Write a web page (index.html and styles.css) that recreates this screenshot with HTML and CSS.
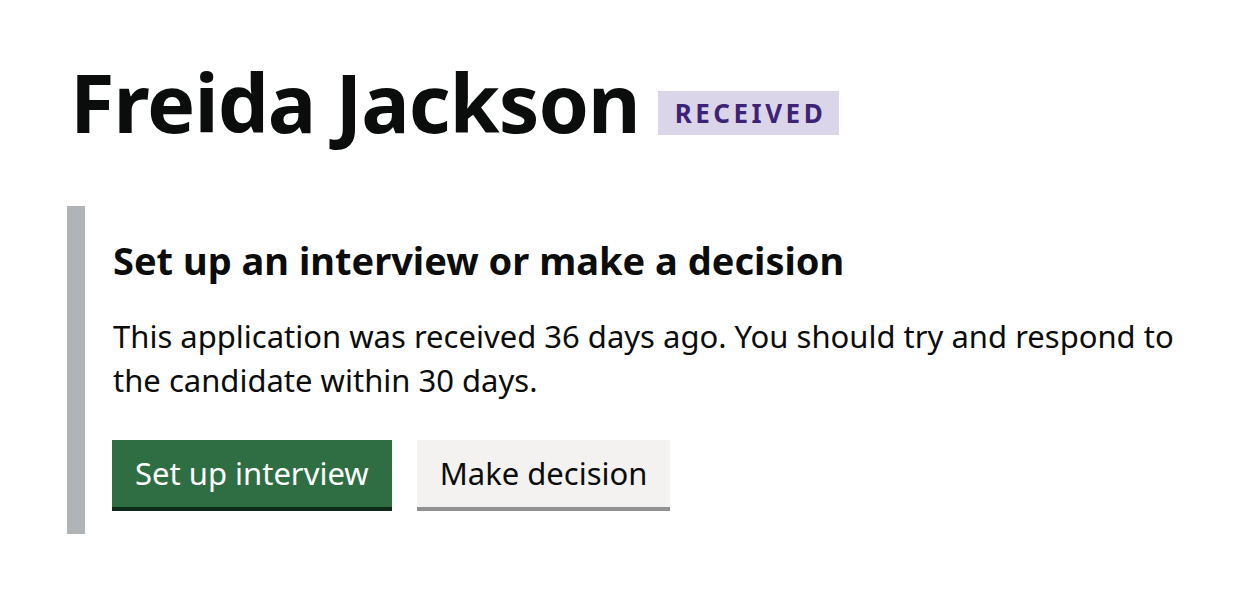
FILE: index.html
```html
<!DOCTYPE html>
<html lang="en">
<head>
<meta charset="utf-8">
<title>Freida Jackson</title>
<link rel="stylesheet" href="styles.css">
</head>
<body>
<main class="page">
  <h1 class="title">
    <span class="title-name">Freida Jackson</span>
    <strong class="tag">Received</strong>
  </h1>
  <div class="inset">
    <h2 class="inset-heading">Set up an interview or make a decision</h2>
    <p class="inset-body">This application was received 36 days ago. You should try and respond to the candidate within 30 days.</p>
    <div class="button-group">
      <a class="button button-primary" href="#">Set up interview</a>
      <a class="button button-secondary" href="#">Make decision</a>
    </div>
  </div>
</main>
</body>
</html>
```

FILE: styles.css
```css
* { box-sizing: border-box; }
html, body { margin: 0; padding: 0; background: #ffffff; }
body {
  font-family: "Noto Sans", "Liberation Sans", Arial, sans-serif;
  color: #0b0c0c;
}
.page {
  padding: 52px 0 0 67px;
}
.title {
  display: flex;
  align-items: center;
  gap: 18px;
  margin: 0 0 54px 3px;
  font-size: 81px;
  line-height: 100px;
  font-weight: 700;
  letter-spacing: -1px;
}
.tag {
  display: inline-block;
  background: #dbd5e9;
  color: #3d2375;
  font-size: 26px;
  line-height: 44px;
  padding: 0 13px 0 17px;
  letter-spacing: 3.5px;
  text-transform: uppercase;
  font-weight: 700;
  margin-top: 22px;
}
.inset {
  border-left: 18px solid #b1b4b6;
  padding: 30px 0 27px 27px;
  width: 1160px;
}
.inset-heading {
  margin: 0 0 30px 1px;
  font-size: 38px;
  line-height: 48px;
  font-weight: 700;
}
.inset-body {
  margin: 0 0 38px 1px;
  max-width: 1075px;
  font-size: 31px;
  line-height: 44px;
}
.button-group {
  display: flex;
  gap: 25px;
}
.button {
  display: inline-block;
  font-size: 31px;
  line-height: 39px;
  padding: 14px 23px;
  height: 67px;
  text-decoration: none;
}
.button-primary {
  background: #2f6e43;
  color: #ffffff;
  box-shadow: 0 4px 0 #0f2a18;
}
.button-secondary {
  background: #f3f2f1;
  color: #0b0c0c;
  box-shadow: 0 4px 0 #929191;
}
```
